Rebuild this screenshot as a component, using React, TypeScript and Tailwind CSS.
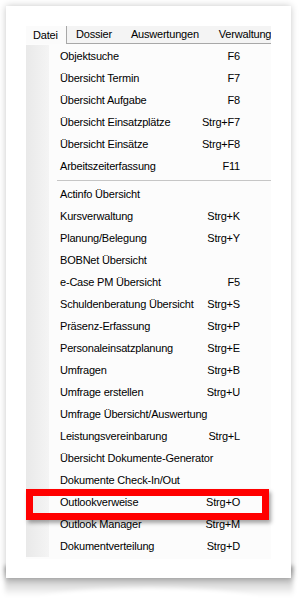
import React from "react";

type Item = { label: string; key?: string };

const group1: Item[] = [
  { label: "Objektsuche", key: "F6" },
  { label: "Übersicht Termin", key: "F7" },
  { label: "Übersicht Aufgabe", key: "F8" },
  { label: "Übersicht Einsatzplätze", key: "Strg+F7" },
  { label: "Übersicht Einsätze", key: "Strg+F8" },
  { label: "Arbeitszeiterfassung", key: "F11" },
];

const group2: Item[] = [
  { label: "Actinfo Übersicht" },
  { label: "Kursverwaltung", key: "Strg+K" },
  { label: "Planung/Belegung", key: "Strg+Y" },
  { label: "BOBNet Übersicht" },
  { label: "e-Case PM Übersicht", key: "F5" },
  { label: "Schuldenberatung Übersicht", key: "Strg+S" },
  { label: "Präsenz-Erfassung", key: "Strg+P" },
  { label: "Personaleinsatzplanung", key: "Strg+E" },
  { label: "Umfragen", key: "Strg+B" },
  { label: "Umfrage erstellen", key: "Strg+U" },
  { label: "Umfrage Übersicht/Auswertung" },
  { label: "Leistungsvereinbarung", key: "Strg+L" },
  { label: "Übersicht Dokumente-Generator" },
  { label: "Dokumente Check-In/Out" },
  { label: "Outlookverweise", key: "Strg+O" },
  { label: "Outlook Manager", key: "Strg+M" },
  { label: "Dokumentverteilung", key: "Strg+D" },
];

function Row({ item }: { item: Item }) {
  return (
    <div className="flex h-[22px] items-center">
      <div className="w-[23px] h-full shrink-0 bg-[linear-gradient(to_right,#e9e9e9,#f4f4f4)]" />
      <div className="flex flex-1 items-center justify-between pl-[11px] pr-[31px] whitespace-nowrap">
        <span>{item.label}</span>
        {item.key ? <span>{item.key}</span> : null}
      </div>
    </div>
  );
}

export default function App() {
  return (
    <div
      className="relative w-[305px] h-[608px] overflow-hidden bg-white pl-[6px] pt-[6px] text-black"
      style={{ fontFamily: '"Liberation Sans", Arial, sans-serif' }}
    >
      {/* curled page shadow */}
      <div className="absolute left-[5px] top-[566px] w-[288px] h-[30px] bg-[linear-gradient(to_bottom,rgba(0,0,0,0.45),rgba(0,0,0,0.15)_60%,rgba(0,0,0,0))] blur-[2px]" />
      <div className="absolute left-[20px] top-[588px] w-[258px] h-[40px] rounded-[50%] bg-white blur-[2px]" />

      <div className="relative w-[285px] h-[572px] bg-white shadow-[0_0_7px_rgba(0,0,0,0.22)] pl-[20px] pt-[20px]">
        <div className="relative w-[245px] text-[11px] tracking-[-0.2px] leading-none">
          {/* menu bar */}
          <div className="flex h-[18px] bg-[#f4f4f4]">
            <div className="w-[41px] h-full shrink-0 bg-[#fbfbfb] border-r border-[#a8a8a8] pl-[7px] flex items-center">
              Datei
            </div>
            <div className="flex flex-1 items-center h-full border-b border-[#a8a8a8] whitespace-nowrap overflow-hidden">
              <span className="ml-[9px]">Dossier</span>
              <span className="ml-[19px]">Auswertungen</span>
              <span className="ml-[20px]">Verwaltung</span>
            </div>
          </div>

          {/* dropdown */}
          <div className="bg-[#fcfcfc] pt-[1px] pb-[2px]">
            {group1.map((it) => (
              <Row key={it.label} item={it} />
            ))}
            <div className="flex h-[6px]">
              <div className="w-[23px] h-full shrink-0 bg-[linear-gradient(to_right,#e9e9e9,#f4f4f4)]" />
              <div className="flex-1 pl-[8px] pt-[3px]">
                <div className="h-[1px] bg-[#c6c6c6]" />
              </div>
            </div>
            {group2.map((it) => (
              <Row key={it.label} item={it} />
            ))}
          </div>

          {/* red highlight */}
          <div className="absolute left-0 top-[463px] w-[243px] h-[31px] border-[7px] border-[#ff0000] shadow-[2px_3px_4px_rgba(0,0,0,0.35)]" />
        </div>
      </div>
    </div>
  );
}
